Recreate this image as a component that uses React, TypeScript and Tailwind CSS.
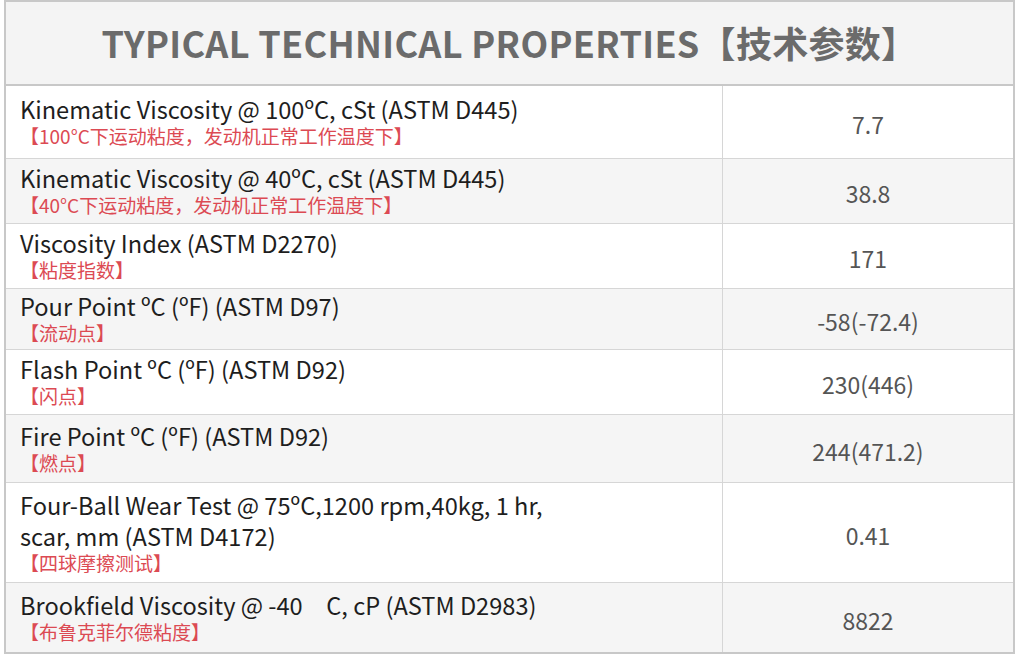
const rows = [
  {
    en: ["Kinematic Viscosity @ 100ºC, cSt (ASTM D445)"],
    cn: "【100°C下运动粘度，发动机正常工作温度下】",
    value: "7.7",
    h: "h-[73px]",
    bg: "bg-white",
  },
  {
    en: ["Kinematic Viscosity @ 40ºC, cSt (ASTM D445)"],
    cn: "【40°C下运动粘度，发动机正常工作温度下】",
    value: "38.8",
    h: "h-[65px]",
    bg: "bg-[#f5f5f5]",
  },
  {
    en: ["Viscosity Index (ASTM D2270)"],
    cn: "【粘度指数】",
    value: "171",
    h: "h-[65px]",
    bg: "bg-white",
  },
  {
    en: ["Pour Point ºC (ºF) (ASTM D97)"],
    cn: "【流动点】",
    value: "-58(-72.4)",
    h: "h-[61px]",
    bg: "bg-[#f5f5f5]",
  },
  {
    en: ["Flash Point ºC (ºF) (ASTM D92)"],
    cn: "【闪点】",
    value: "230(446)",
    h: "h-[65px]",
    bg: "bg-white",
  },
  {
    en: ["Fire Point ºC (ºF) (ASTM D92)"],
    cn: "【燃点】",
    value: "244(471.2)",
    h: "h-[68px]",
    bg: "bg-[#f5f5f5]",
  },
  {
    en: ["Four-Ball Wear Test @ 75ºC,1200 rpm,40kg, 1 hr,", "scar, mm (ASTM D4172)"],
    cn: "【四球摩擦测试】",
    value: "0.41",
    h: "h-[100px]",
    bg: "bg-white",
  },
  {
    en: ["Brookfield Viscosity @ -40\u2002\u2002C, cP (ASTM D2983)"],
    cn: "【布鲁克菲尔德粘度】",
    value: "8822",
    h: "h-[69px]",
    bg: "bg-[#f5f5f5]",
  },
];

const App = () => {
  return (
    <div className="w-[1024px] h-[659px] bg-white font-['Noto_Sans_CJK_SC',sans-serif]">
      <div className="ml-[4px] w-[1011px] border-2 border-[#c8c8c8]">
        <div className="h-[84px] border-b-2 border-[#c8c8c8] bg-[#f4f4f4] flex items-center justify-center pb-[2px]">
          <h1 className="text-[36px] font-bold text-[#6b6b6b] tracking-[0.3px]">
            TYPICAL TECHNICAL PROPERTIES【技术参数】
          </h1>
        </div>
        {rows.map((row, i) => (
          <div
            key={i}
            className={`grid grid-cols-[717px_1fr] ${row.h} ${row.bg} ${
              i < rows.length - 1 ? "border-b border-[#d6d6d6]" : ""
            }`}
          >
            <div className="flex flex-col justify-center pl-[14px] border-r border-[#d6d6d6]">
              {row.en.map((line, j) => (
                <p
                  key={line}
                  className={`text-[23.6px] text-[#1e1e1e] ${
                    row.en.length > 1 && j === 0 ? "leading-[33px]" : "leading-[28px]"
                  }`}
                >
                  {line}
                </p>
              ))}
              <p className="text-[19px] leading-[26px] text-[#dc4a53]">{row.cn}</p>
            </div>
            <div className="flex items-center justify-center pt-[5px] text-[23px] text-[#555]">
              {row.value}
            </div>
          </div>
        ))}
      </div>
    </div>
  );
};

export default App;
